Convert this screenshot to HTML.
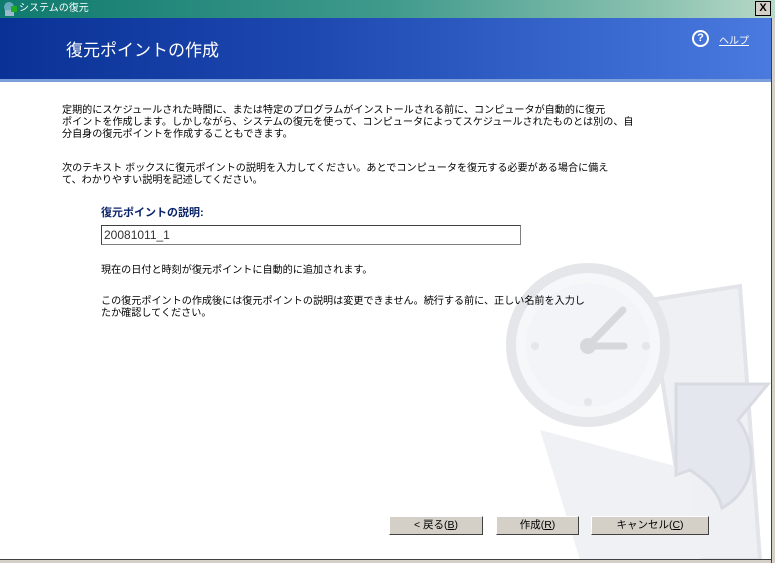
<!DOCTYPE html>
<html><head><meta charset="utf-8"><style>
*{margin:0;padding:0;box-sizing:border-box}
body{width:775px;height:563px;overflow:hidden;background:#fff;position:relative;font-family:"Liberation Sans","Noto Sans CJK JP",sans-serif;font-size:11px;color:#000}
.tb{position:absolute;left:0;top:0;width:775px;height:18px;background:linear-gradient(90deg,#0f7a6e,#3f9a8c 50%,#8cc2b0 85%,#b8d8c8);color:#fff;font-size:10px;line-height:18px;padding-left:19px}
.x{position:absolute;right:4px;top:1px;width:16px;height:15px;background:#d4d0c8;border:1px solid #000;color:#000;font-size:11px;line-height:13px;text-align:center;font-weight:bold}
.hd{position:absolute;left:0;top:18px;width:771px;height:61px;background:linear-gradient(90deg,#0a3296,#1d48b0 40%,#3a6ad0 80%,#4a7ade)}
.strip{position:absolute;left:0;top:79px;width:771px;height:3px;background:#7ca0dc}
.ht{position:absolute;left:66px;top:36px;color:#fff;font-size:17px}
.help{position:absolute;left:719px;top:32px;color:#fff;font-size:10px;text-decoration:underline}
.q{position:absolute;left:692px;top:30px;width:17px;height:17px;border-radius:50%;border:2px solid #fff;color:#fff;font-weight:bold;font-size:11px;text-align:center;line-height:13px}
.rb{position:absolute;left:771px;top:18px;width:4px;height:545px;background:#d4d0c8;border-left:1px solid #404040}
.bb{position:absolute;left:0;top:559px;width:771px;height:4px;background:#d4d0c8;border-top:1px solid #404040}
.p{position:absolute;left:62px;line-height:12px;font-size:10.1px;white-space:nowrap}
.lbl{position:absolute;left:101px;top:204px;color:#0a246a;font-weight:bold;font-size:11px}
.in{position:absolute;left:101px;top:225px;width:420px;height:20px;border:1px solid #7f7f7f;border-top-color:#404040;border-left-color:#404040;font-size:12px;line-height:18px;padding-left:2px;color:#333}
.btn{position:absolute;top:516px;height:19px;background:#d4d0c8;border:1px solid;border-color:#fff #404040 #404040 #fff;text-align:center;font-size:10.5px;line-height:17px}
</style></head><body>
<svg style="position:absolute;left:0;top:0" width="775" height="563">
<path d="M650 300 L740 286 L760 560 L690 560 Z" fill="#eef0f4" stroke="#e2e4ea" stroke-width="4"/>
<path d="M540 430 L580 560 L700 560 L690 470 Z" fill="#f0f1f4"/>
<circle cx="588" cy="345" r="77" fill="#f6f7f9" stroke="#e4e6ea" stroke-width="10"/>
<circle cx="588" cy="345" r="62" fill="#f3f4f7"/>
<line x1="588" y1="346" x2="623" y2="310" stroke="#d6d8dc" stroke-width="7" stroke-linecap="round"/>
<line x1="588" y1="346" x2="624" y2="346" stroke="#d6d8dc" stroke-width="7" stroke-linecap="round"/>
<circle cx="588" cy="346" r="8" fill="#d6d8dc"/>
<circle cx="535" cy="346" r="4" fill="#e4e6ea"/><circle cx="646" cy="346" r="4" fill="#e4e6ea"/><circle cx="588" cy="402" r="4" fill="#e4e6ea"/>
<path d="M676 384 L768 384 L738 420 C760 450 755 490 722 508 C718 490 705 480 690 470 L676 475 Z" fill="#e4e8ee" stroke="#d8dce2" stroke-width="3"/>
</svg>
<div class="tb">システムの復元<div class="x">X</div></div>
<svg style="position:absolute;left:2px;top:1px" width="16" height="16"><circle cx="7" cy="6" r="5" fill="#6ab"/><rect x="3" y="9" width="9" height="6" fill="#9bc"/><rect x="9" y="5" width="6" height="6" fill="#2a2"/></svg>
<div class="hd"></div><div class="strip"></div>
<div class="ht">復元ポイントの作成</div>
<div class="q">?</div><div class="help">ヘルプ</div>
<div class="rb"></div><div class="bb"></div>
<div class="p" style="top:105px">定期的にスケジュールされた時間に、または特定のプログラムがインストールされる前に、コンピュータが自動的に復元<br>ポイントを作成します。しかしながら、システムの復元を使って、コンピュータによってスケジュールされたものとは別の、自<br>分自身の復元ポイントを作成することもできます。</div>
<div class="p" style="top:163px">次のテキスト ボックスに復元ポイントの説明を入力してください。あとでコンピュータを復元する必要がある場合に備え<br>て、わかりやすい説明を記述してください。</div>
<div class="lbl">復元ポイントの説明:</div>
<div class="in">20081011_1</div>
<div class="p" style="left:101px;top:265px">現在の日付と時刻が復元ポイントに自動的に追加されます。</div>
<div class="p" style="left:101px;top:296px">この復元ポイントの作成後には復元ポイントの説明は変更できません。続行する前に、正しい名前を入力し<br>たか確認してください。</div>
<div class="btn" style="left:389px;width:94px">&lt; 戻る(<u>B</u>)</div>
<div class="btn" style="left:496px;width:83px">作成(<u>R</u>)</div>
<div class="btn" style="left:591px;width:118px">キャンセル(<u>C</u>)</div>
</body></html>
